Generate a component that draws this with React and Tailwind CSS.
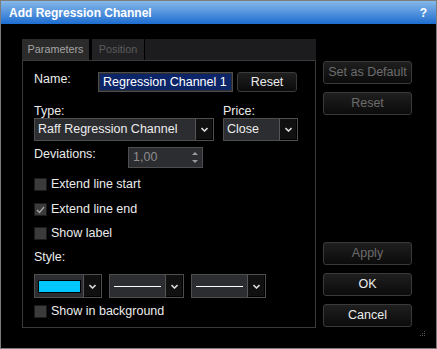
import React from "react";

const FONT = { fontFamily: '"Liberation Sans", Arial, sans-serif' };

function Chevron() {
  return (
    <svg width="7" height="5" viewBox="0 0 7 5">
      <polyline points="0.5,1 3.5,4 6.5,1" fill="none" stroke="#d8d8d8" strokeWidth="1.6" />
    </svg>
  );
}

function ArrowBtn() {
  return (
    <div className="flex h-full w-[18px] items-center justify-center border-l border-[#555] bg-[#101010] shadow-[inset_-1px_-1px_0_#000]">
      <Chevron />
    </div>
  );
}

function Select({ width, children }) {
  return (
    <div className={`flex h-[23px] items-stretch border border-[#4e4e4e] bg-[#2c2d31] ${width}`}>
      <div className="flex flex-1 items-center pl-[3px] text-[#ececec]">{children}</div>
      <ArrowBtn />
    </div>
  );
}

function LineSelect() {
  return (
    <div className="flex h-[24px] w-[75px] items-stretch border border-[#4e4e4e] bg-[#2c2d31]">
      <div className="flex flex-1 items-center pl-[4px]">
        <div className="h-px w-[47px] bg-white" />
      </div>
      <ArrowBtn />
    </div>
  );
}

function Checkbox({ checked, label, className = "" }) {
  return (
    <div className={`flex h-[13px] items-center ${className}`}>
      <div className="flex h-[13px] w-[13px] items-center justify-center border border-[#1c1c1c] bg-[#3b3b3b]">
        {checked && (
          <svg width="9" height="8" viewBox="0 0 9 8">
            <polyline points="1,4 3.5,6.5 8,1" fill="none" stroke="#a8a8a8" strokeWidth="1.3" />
          </svg>
        )}
      </div>
      <span className="ml-[4px] leading-[15px] text-[#ececec]">{label}</span>
    </div>
  );
}

function SideButton({ children, disabled, className = "" }) {
  return (
    <div
      className={`flex h-[23px] w-[89px] items-center justify-center rounded-[3px] border border-[#3a3a3a] bg-gradient-to-b from-[#1f1f1f] to-[#0b0b0b] ${
        disabled ? "text-[#6c6c6c]" : "text-[#ececec]"
      } ${className}`}
    >
      {children}
    </div>
  );
}

export default function App() {
  return (
    <div
      style={FONT}
      className="flex h-[349px] w-[437px] flex-col border border-[#7c7c7c] bg-black text-[12.5px]"
    >
      {/* title bar */}
      <div className="flex h-[23px] items-center justify-between bg-gradient-to-b from-[#86b8e8] to-[#1a6dd0] pl-[8px] pr-[9px] text-[12px] font-bold text-white">
        <span>Add Regression Channel</span>
        <span>?</span>
      </div>

      <div className="flex flex-1 pl-[21px]">
        {/* left panel */}
        <div className="mt-[15px] flex w-[294px] flex-col">
          <div className="flex h-[21px] bg-[#1c1c1f] text-[10.8px]">
            <div className="flex w-[67px] items-center justify-center bg-[#2b2b2b] text-[#a4a4a4]">Parameters</div>
            <div className="w-[3px] bg-black" />
            <div className="flex w-[52px] items-center justify-center bg-[#222224] text-[#5c5c5c]">Position</div>
            <div className="w-px bg-black" />
          </div>

          <div className="flex h-[268px] flex-col border border-[#3a3a3a] pl-[11px]">
            {/* name */}
            <div className="mt-[11px] flex h-[20px] items-start">
              <span className="w-[64px] leading-[15px] text-[#ececec]">Name:</span>
              <div className="flex h-[20px] w-[135px] items-center border border-[#4e4e4e] bg-[#2c2d31] px-[1px]">
                <span className="flex h-[16px] flex-1 items-center bg-[#0c2468] pl-[3px] text-white">Regression Channel 1</span>
              </div>
              <div className="ml-[4px] flex h-[20px] w-[60px] items-center justify-center rounded-[3px] border border-[#3a3a3a] bg-gradient-to-b from-[#1f1f1f] to-[#0b0b0b] text-[#ececec]">
                Reset
              </div>
            </div>

            {/* type / price labels */}
            <div className="mt-[12px] flex h-[14px] leading-[15px] text-[#ececec]">
              <span className="w-[189px]">Type:</span>
              <span>Price:</span>
            </div>
            <div className="flex gap-[9px]">
              <Select width="w-[180px]">Raff Regression Channel</Select>
              <Select width="w-[75px]">Close</Select>
            </div>

            {/* deviations */}
            <div className="mt-[6px] flex items-start">
              <span className="w-[94px] leading-[15px] text-[#ececec]">Deviations:</span>
              <div className="flex h-[21px] w-[75px] items-center justify-between border border-[#4e4e4e] bg-[#2c2d31] pl-[4px] pr-[4px] text-[#8c8c8c]">
                <span>1,00</span>
                <div className="flex flex-col gap-[5px]">
                  <svg width="6" height="3" viewBox="0 0 6 3"><polygon points="0,3 3,0 6,3" fill="#9a9a9a" /></svg>
                  <svg width="6" height="3" viewBox="0 0 6 3"><polygon points="0,0 6,0 3,3" fill="#9a9a9a" /></svg>
                </div>
              </div>
            </div>

            <Checkbox label="Extend line start" className="mt-[10px]" />
            <Checkbox checked label="Extend line end" className="mt-[12px]" />
            <Checkbox label="Show label" className="mt-[11px]" />

            <span className="mt-[10px] h-[15px] leading-[15px] text-[#ececec]">Style:</span>

            <div className="mt-[9px] flex gap-[7px]">
              <div className="flex h-[24px] w-[68px] items-stretch border border-[#4e4e4e] bg-[#2c2d31]">
                <div className="flex flex-1 items-center pl-[3px]">
                  <div className="h-[13px] w-[43px] border border-black bg-[#00c8ff]" />
                </div>
                <ArrowBtn />
              </div>
              <LineSelect />
              <LineSelect />
            </div>

            <Checkbox label="Show in background" className="mt-[7px]" />
          </div>
        </div>

        {/* right buttons */}
        <div className="relative ml-[7px] flex flex-1 flex-col">
          <SideButton disabled className="mt-[37px]">Set as Default</SideButton>
          <SideButton disabled className="mt-[8px]">Reset</SideButton>
          <SideButton disabled className="mt-[127px]">Apply</SideButton>
          <SideButton className="mt-[8px]">OK</SideButton>
          <SideButton className="mt-[8px]">Cancel</SideButton>
          <svg className="absolute bottom-[11px] right-[10px]" width="6" height="6" viewBox="0 0 6 6">
            <rect x="4" y="0" width="1" height="1" fill="#555" />
            <rect x="2" y="2" width="1" height="1" fill="#555" />
            <rect x="4" y="2" width="1" height="1" fill="#555" />
            <rect x="0" y="4" width="1" height="1" fill="#555" />
            <rect x="2" y="4" width="1" height="1" fill="#555" />
            <rect x="4" y="4" width="1" height="1" fill="#555" />
          </svg>
        </div>
      </div>
    </div>
  );
}
